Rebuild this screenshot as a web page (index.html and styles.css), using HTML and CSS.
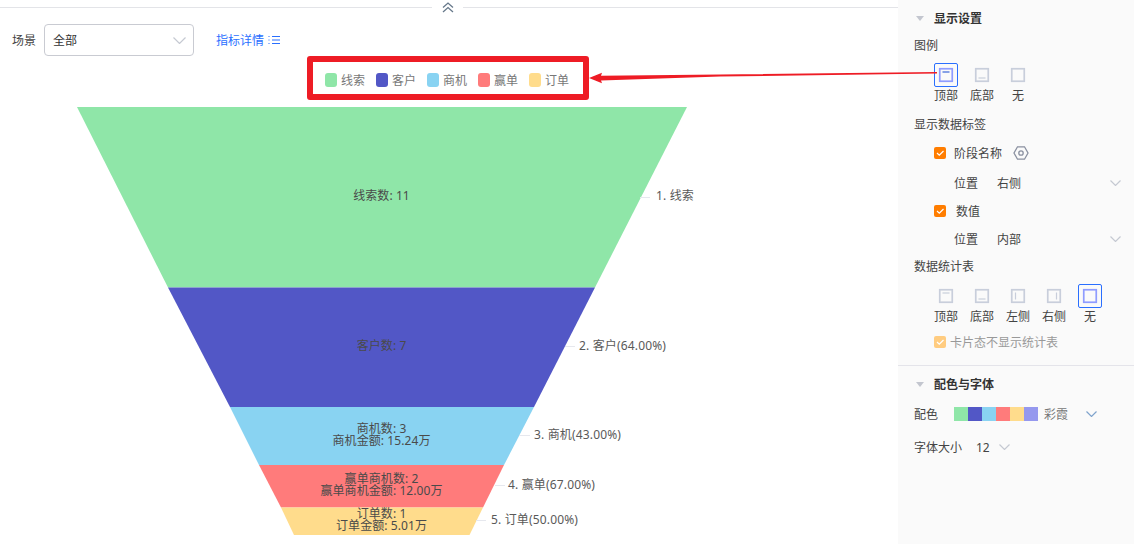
FILE: index.html
```html
<!DOCTYPE html>
<html lang="zh">
<head>
<meta charset="utf-8">
<title>漏斗图设置</title>
<link rel="stylesheet" href="styles.css">
</head>
<body>
<div class="page">
  <main class="main">
    <div class="collapse">
      <span class="collapse-btn">
        <svg width="12" height="11" viewBox="0 0 12 11" fill="none" stroke="#66788a" stroke-width="1.3"><path d="M1 5.5 6 1l5 4.5M1 10 6 5.500l5 4.500"/></svg>
      </span>
    </div>
    <div class="toolbar">
      <span class="tool-label">场景</span>
      <div class="select"><span>全部</span>
        <svg class="chev" width="13" height="7" viewBox="0 0 13 7" fill="none" stroke="#c5c9d2" stroke-width="1.2"><path d="M.5.500l6 6 6-6"/></svg>
      </div>
      <a class="link">指标详情
        <svg width="12" height="10" viewBox="0 0 12 10" fill="none" stroke="#2a6fff"><path d="M4 1.500h8M4 5h8M4 8.500h8M1 1v1M1 4.500v1M1 8v1"/></svg>
      </a>
    </div>
    <div class="legend-row">
      <div class="legend">
        <span class="lg"><i class="sw c1"></i>线索</span>
        <span class="lg"><i class="sw c2"></i>客户</span>
        <span class="lg"><i class="sw c3"></i>商机</span>
        <span class="lg"><i class="sw c4"></i>赢单</span>
        <span class="lg"><i class="sw c5"></i>订单</span>
      </div>
    </div>
    <svg class="funnel" width="898" height="437" viewBox="0 107 898 437">
      <polygon points="77,107 687,107 595,287.500 168,287.500" fill="#8fe6a8"/>
      <polygon points="168,287.500 595,287.500 534,407 230,407" fill="#5257c6"/>
      <polygon points="230,407 534,407 504,465 259,465" fill="#89d3f2"/>
      <polygon points="259,465 504,465 483,507.500 281,507.500" fill="#ff7b7b"/>
      <polygon points="281,507.500 483,507.500 469.500,535 294,535" fill="#ffdc8c"/>
      <g stroke="#e6e8ee" stroke-width="1">
        <path d="M640 197.500h10M565 346.500h10M519 435.500h11M495 485.500h10M476 520.500h10"/>
      </g>
      <g class="inner" text-anchor="middle">
        <text x="381.500" y="200">线索数: 11</text>
        <text x="381.500" y="350">客户数: 7</text>
        <text x="381.500" y="433">商机数: 3</text>
        <text x="381.500" y="445">商机金额: 15.24万</text>
        <text x="381.500" y="483">赢单商机数: 2</text>
        <text x="381.500" y="495">赢单商机金额: 12.00万</text>
        <text x="381.500" y="518">订单数: 1</text>
        <text x="381.500" y="530">订单金额: 5.01万</text>
      </g>
      <g class="outer">
        <text x="656" y="200">1. 线索</text>
        <text x="579" y="350">2. 客户(64.00%)</text>
        <text x="534" y="439">3. 商机(43.00%)</text>
        <text x="508" y="489">4. 赢单(67.00%)</text>
        <text x="491" y="524">5. 订单(50.00%)</text>
      </g>
    </svg>
  </main>

  <aside class="panel">
    <div class="row sec-title"><i class="tri"></i>显示设置</div>
    <div class="row head m7">图例</div>
    <div class="opts m8">
      <div class="opt"><span class="box on"><svg width="16" height="16" viewBox="0 0 16 16" fill="none"><rect x="1.750" y="1.750" width="12.500" height="12.500" stroke="#8f9cff" stroke-width="1.700"/><path d="M4.500 5h7" stroke="#3a66d8" stroke-width="1.200"/></svg></span><span class="opt-label">顶部</span></div>
      <div class="opt"><span class="box"><svg width="16" height="16" viewBox="0 0 16 16" fill="none"><rect x="1.750" y="1.750" width="12.500" height="12.500" stroke="#c8cedb" stroke-width="1.700"/><path d="M4.500 11h7" stroke="#c8cedb" stroke-width="1.200"/></svg></span><span class="opt-label">底部</span></div>
      <div class="opt"><span class="box"><svg width="16" height="16" viewBox="0 0 16 16" fill="none"><rect x="1.750" y="1.750" width="12.500" height="12.500" stroke="#c8cedb" stroke-width="1.700"/></svg></span><span class="opt-label">无</span></div>
    </div>
    <div class="row head m11">显示数据标签</div>
    <div class="row indent m9"><i class="check"><svg width="12" height="12" viewBox="0 0 12 12" fill="none" stroke="#fff" stroke-width="1.200"><path d="M3 6l2.300 2.200L9.500 4"/></svg></i><span class="cklabel">阶段名称</span>
      <svg class="hex" width="16" height="16" viewBox="0 0 16 16" fill="none" stroke="#8a90a0" stroke-width="1.300"><path d="M4.500 1.800h7L15 8l-3.500 6.200h-7L1 8z"/><circle cx="8" cy="8" r="2.200"/></svg>
    </div>
    <div class="row sub m10"><span class="sub-k">位置</span><span>右侧</span>
      <svg class="sub-chev" width="11" height="6" viewBox="0 0 11 6" fill="none" stroke="#c5c9d2" stroke-width="1.200"><path d="M.5.500l5 5 5-5"/></svg></div>
    <div class="row indent m8"><i class="check"><svg width="12" height="12" viewBox="0 0 12 12" fill="none" stroke="#fff" stroke-width="1.200"><path d="M3 6l2.300 2.200L9.500 4"/></svg></i><span class="cklabel2">数值</span></div>
    <div class="row sub m8"><span class="sub-k">位置</span><span>内部</span>
      <svg class="sub-chev" width="11" height="6" viewBox="0 0 11 6" fill="none" stroke="#c5c9d2" stroke-width="1.200"><path d="M.5.500l5 5 5-5"/></svg></div>
    <div class="row head m7">数据统计表</div>
    <div class="opts m8">
      <div class="opt"><span class="box"><svg width="16" height="16" viewBox="0 0 16 16" fill="none" stroke="#c8cedb"><rect x="1.750" y="1.750" width="12.500" height="12.500" stroke-width="1.700"/><path d="M4.500 5h7" stroke-width="1.200"/></svg></span><span class="opt-label">顶部</span></div>
      <div class="opt"><span class="box"><svg width="16" height="16" viewBox="0 0 16 16" fill="none" stroke="#c8cedb"><rect x="1.750" y="1.750" width="12.500" height="12.500" stroke-width="1.700"/><path d="M4.500 11h7" stroke-width="1.200"/></svg></span><span class="opt-label">底部</span></div>
      <div class="opt"><span class="box"><svg width="16" height="16" viewBox="0 0 16 16" fill="none" stroke="#c8cedb"><rect x="1.750" y="1.750" width="12.500" height="12.500" stroke-width="1.700"/><path d="M5.500 4.500v7" stroke-width="1.200"/></svg></span><span class="opt-label">左侧</span></div>
      <div class="opt"><span class="box"><svg width="16" height="16" viewBox="0 0 16 16" fill="none" stroke="#c8cedb"><rect x="1.750" y="1.750" width="12.500" height="12.500" stroke-width="1.700"/><path d="M10.500 4.500v7" stroke-width="1.200"/></svg></span><span class="opt-label">右侧</span></div>
      <div class="opt"><span class="box on"><svg width="16" height="16" viewBox="0 0 16 16" fill="none"><rect x="1.750" y="1.750" width="12.500" height="12.500" stroke="#8f9cff" stroke-width="1.700"/></svg></span><span class="opt-label">无</span></div>
    </div>
    <div class="row indent muted m8"><i class="check dim"><svg width="12" height="12" viewBox="0 0 12 12" fill="none" stroke="#fff" stroke-width="1.200"><path d="M3 6l2.300 2.200L9.500 4"/></svg></i><span class="cklabel3">卡片态不显示统计表</span></div>
    <div class="divider"></div>
    <div class="row sec-title m8"><i class="tri"></i>配色与字体</div>
    <div class="row head m10"><span class="color-k">配色</span>
      <span class="swatches"><i class="c1"></i><i class="c2"></i><i class="c3"></i><i class="c4"></i><i class="c5"></i><i class="c6"></i></span>
      <span class="color-name">彩霞</span>
      <svg class="color-chev" width="11" height="6" viewBox="0 0 11 6" fill="none" stroke="#7fa3cc" stroke-width="1.200"><path d="M.5.500l5 5 5-5"/></svg>
    </div>
    <div class="row head m13"><span class="font-k">字体大小</span><span class="font-v">12</span>
      <svg width="11" height="6" viewBox="0 0 11 6" fill="none" stroke="#c5c9d2" stroke-width="1.200"><path d="M.5.500l5 5 5-5"/></svg>
    </div>
  </aside>

  <svg class="arrow" width="360" height="20" viewBox="585 68 360 20">
    <polygon points="589,78 602,72.700 601,75.800 720,74.500 937,72 937,73.500 720,76.500 601,80.500 602,83.300" fill="#ee1c25"/>
  </svg>
</div>
</body>
</html>
```
FILE: styles.css
```css
* { box-sizing: border-box; }
html, body { margin: 0; padding: 0; height: 100%; background: #fff; }
body {
  font-family: "Noto Sans", "Noto Sans CJK SC", sans-serif;
  font-size: 12px;
  color: #333;
  overflow: hidden;
}
i { display: inline-block; font-style: normal; }

.page { position: relative; display: flex; width: 1134px; height: 544px; overflow: hidden; }
.main { width: 898px; flex: none; }

.collapse {
  height: 15px;
  display: flex;
  justify-content: center;
  padding-right: 3px;
  background: linear-gradient(#fff 7px, #e3e4e8 7px, #e3e4e8 8px, #fff 8px);
}
.collapse-btn {
  width: 31px;
  height: 15px;
  background: #fff;
  display: flex;
  justify-content: center;
  padding-top: 2px;
}

.toolbar { display: flex; align-items: center; height: 32px; margin-top: 9px; padding-left: 12px; }
.tool-label { width: 32px; color: #444; }
.select {
  width: 150px;
  height: 32px;
  border: 1px solid #c9cbd2;
  border-radius: 4px;
  display: flex;
  align-items: center;
  justify-content: space-between;
  padding: 0 7px 0 8px;
  color: #333;
  background: #fff;
}
.link { margin-left: 22px; color: #2a6fff; display: flex; align-items: center; gap: 4px; }

.legend-row { display: flex; justify-content: center; padding-right: 2px; }
.legend {
  width: 282px;
  height: 44px;
  border: 6px solid #ee1c25;
  border-radius: 3px;
  display: flex;
  align-items: center;
  padding-left: 12px;
  color: #777;
}
.lg { width: 51px; flex: none; display: flex; align-items: center; gap: 4px; padding-top: 3px; }
.sw { width: 12px; height: 14px; border-radius: 3px; }
.c1 { background: #8fe6a8; }
.c2 { background: #5257c6; }
.c3 { background: #89d3f2; }
.c4 { background: #ff7b7b; }
.c5 { background: #ffdc8c; }
.c6 { background: #9598ee; }

.funnel { display: block; margin-top: 7px; }
.funnel text { font-family: "Noto Sans", "Noto Sans CJK SC", sans-serif; font-size: 12px; }
.inner { fill: #4a4a4a; letter-spacing: .08px; }
.outer { fill: #595959; letter-spacing: .16px; }

.panel { width: 236px; flex: none; background: #fafafa; padding-top: 8px; color: #333; }
.row { height: 20px; display: flex; align-items: center; }
.m7 { margin-top: 7px; }
.m8 { margin-top: 8px; }
.m9 { margin-top: 9px; }
.m10 { margin-top: 10px; }
.m11 { margin-top: 11px; }
.m13 { margin-top: 13px; }

.sec-title { padding-left: 18px; font-weight: 700; color: #333; }
.tri {
  width: 0; height: 0;
  margin-right: 10px;
  border-left: 4px solid transparent;
  border-right: 4px solid transparent;
  border-top: 5px solid #c3c6cf;
}
.head { padding-left: 16px; color: #444; }

.opts { display: flex; padding-left: 30px; }
.opt { width: 36px; display: flex; flex-direction: column; align-items: center; color: #444; }
.opt-label { height: 16px; line-height: 18px; }
.box { width: 24px; height: 24px; display: flex; align-items: center; justify-content: center; border: 1px solid transparent; border-radius: 2px; }
.box.on { border-color: #2a6fff; }

.indent { padding-left: 36px; color: #444; }
.check { width: 12px; height: 12px; background: #ff7d00; border-radius: 2px; line-height: 0; }
.check.dim { background: #ffcc80; }
.cklabel { margin-left: 8px; }
.cklabel2 { margin-left: 10px; }
.cklabel3 { margin-left: 4px; color: #999; }
.hex { margin-left: 11px; }

.sub { padding-left: 56px; color: #444; }
.sub-k { width: 43px; }
.sub-chev { margin-left: auto; margin-right: 13px; }

.divider { height: 1px; background: #e4e4ea; margin-top: 13px; }

.color-k { width: 40px; }
.swatches { display: flex; }
.swatches i { width: 14px; height: 14px; }
.color-name { margin-left: 6px; width: 42px; color: #777; }
.font-k { width: 62px; }
.font-v { width: 23px; }

.arrow { position: absolute; left: 585px; top: 68px; }
```
